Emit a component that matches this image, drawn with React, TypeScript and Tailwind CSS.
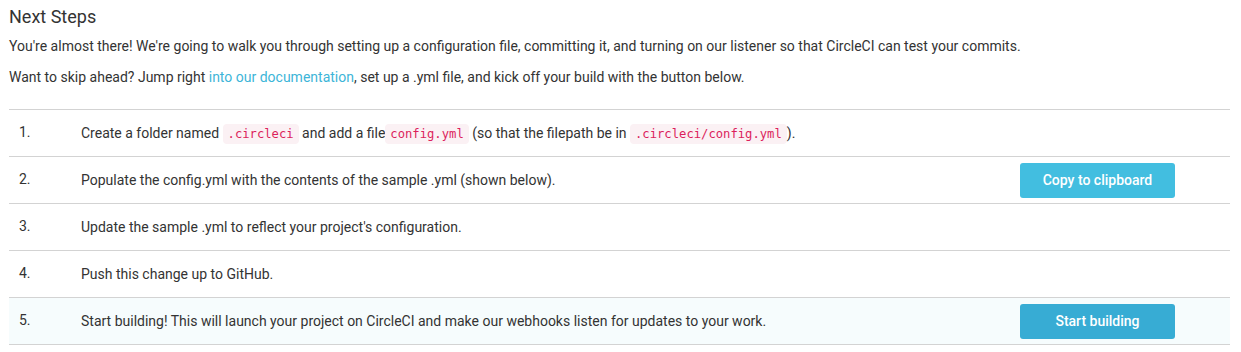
import React from "react";

const Code = ({ children }: { children: React.ReactNode }) => (
  <code className="rounded-[4px] bg-[#fbf1f4] px-[5px] py-[3px] font-['DejaVu_Sans_Mono',monospace] text-[12.2px] leading-[14px] text-[#dc1f5c]">
    {children}
  </code>
);

function Row({
  n,
  children,
  button,
  dark,
  tint,
}: {
  n: string;
  children: React.ReactNode;
  button?: string;
  dark?: boolean;
  tint?: boolean;
}) {
  return (
    <div
      className={`flex h-[47px] items-center border-b border-[#d3d3d3] ${tint ? "bg-[#f6fcfd]" : ""}`}
    >
      <div className="w-[72px] pl-[10px] pb-[2px]">{n}</div>
      <div className="flex-1">{children}</div>
      {button && (
        <div className="pr-[55px]">
          <button
            className={`h-[35px] w-[155px] rounded-[3px] text-[14px] font-medium text-white ${dark ? "bg-[#37acd4]" : "bg-[#42bee0]"}`}
          >
            {button}
          </button>
        </div>
      )}
    </div>
  );
}

export default function App() {
  return (
    <div className="min-h-[352px] bg-white px-[9px] font-['Roboto',sans-serif] text-[14px] text-[#333]">
      <h2 className="pt-[5px] text-[18px] leading-[24px] text-[#333]">Next Steps</h2>
      <p className="mt-[7px] leading-[20px]">
        You're almost there! We're going to walk you through setting up a configuration file, committing it, and turning on our listener so that CircleCI can test your commits.
      </p>
      <p className="mt-[11px] leading-[20px]">
        Want to skip ahead? Jump right <a className="text-[#3db5d8]">into our documentation</a>, set up a .yml file, and kick off your build with the button below.
      </p>
      <div className="mt-[22px] w-[1221px] border-t border-[#d3d3d3]">
        <Row n="1.">
          Create a folder named <Code>.circleci</Code> and add a file<Code>config.yml</Code> (so that the filepath be in <Code>.circleci/config.yml</Code>).
        </Row>
        <Row n="2." button="Copy to clipboard">
          Populate the config.yml with the contents of the sample .yml (shown below).
        </Row>
        <Row n="3.">Update the sample .yml to reflect your project's configuration.</Row>
        <Row n="4.">Push this change up to GitHub.</Row>
        <Row n="5." button="Start building" dark tint>
          Start building! This will launch your project on CircleCI and make our webhooks listen for updates to your work.
        </Row>
      </div>
    </div>
  );
}
